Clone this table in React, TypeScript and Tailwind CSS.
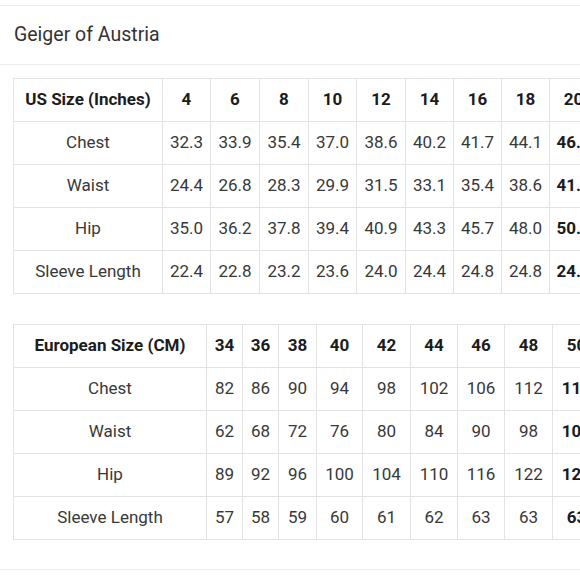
const usCols = "grid-cols-[149px_48px_49px_49px_48px_49px_48px_48px_48px_48px]";
const euCols = "grid-cols-[193px_36px_36px_38px_46px_48px_47px_47px_48px_48px]";

const usRows = [
  ["US Size (Inches)", "4", "6", "8", "10", "12", "14", "16", "18", "20"],
  ["Chest", "32.3", "33.9", "35.4", "37.0", "38.6", "40.2", "41.7", "44.1", "46.5"],
  ["Waist", "24.4", "26.8", "28.3", "29.9", "31.5", "33.1", "35.4", "38.6", "41.0"],
  ["Hip", "35.0", "36.2", "37.8", "39.4", "40.9", "43.3", "45.7", "48.0", "50.4"],
  ["Sleeve Length", "22.4", "22.8", "23.2", "23.6", "24.0", "24.4", "24.8", "24.8", "24.8"],
];

const euRows = [
  ["European Size (CM)", "34", "36", "38", "40", "42", "44", "46", "48", "50"],
  ["Chest", "82", "86", "90", "94", "98", "102", "106", "112", "118"],
  ["Waist", "62", "68", "72", "76", "80", "84", "90", "98", "104"],
  ["Hip", "89", "92", "96", "100", "104", "110", "116", "122", "128"],
  ["Sleeve Length", "57", "58", "59", "60", "61", "62", "63", "63", "63"],
];

const SizeTable = ({ rows, cols }: { rows: string[][]; cols: string }) => (
  <div className="ml-[13px] w-max border-l border-t border-[#e3e3e3]">
    {rows.map((row, r) => (
      <div key={r} className={`grid ${cols}`}>
        {row.map((cell, c) => {
          // header row and the last column are set in bold
          const bold = r === 0 || c === row.length - 1;
          return (
            <div
              key={c}
              className={`flex h-[43px] items-center justify-center whitespace-nowrap border-b border-r border-[#e3e3e3] text-[17px] ${
                bold ? "font-bold text-[#1c1c1c]" : "text-[#383838]"
              }`}
            >
              {cell}
            </div>
          );
        })}
      </div>
    ))}
  </div>
);

export default function App() {
  return (
    <div
      className="h-[580px] w-[580px] overflow-hidden bg-white"
      style={{ fontFamily: "Roboto, 'Noto Sans', sans-serif" }}
    >
      <div className="mt-[5px] border-t border-b border-[#ececec]">
        <div className="flex h-[58px] items-center pl-[14px] text-[19.5px] text-[#333333]">
          Geiger of Austria
        </div>
      </div>

      <div className="mt-[13px]">
        <SizeTable rows={usRows} cols={usCols} />
      </div>

      <div className="mt-[30px]">
        <SizeTable rows={euRows} cols={euCols} />
      </div>

      <div className="mt-[29px] border-t border-[#ececec]" />
    </div>
  );
}
